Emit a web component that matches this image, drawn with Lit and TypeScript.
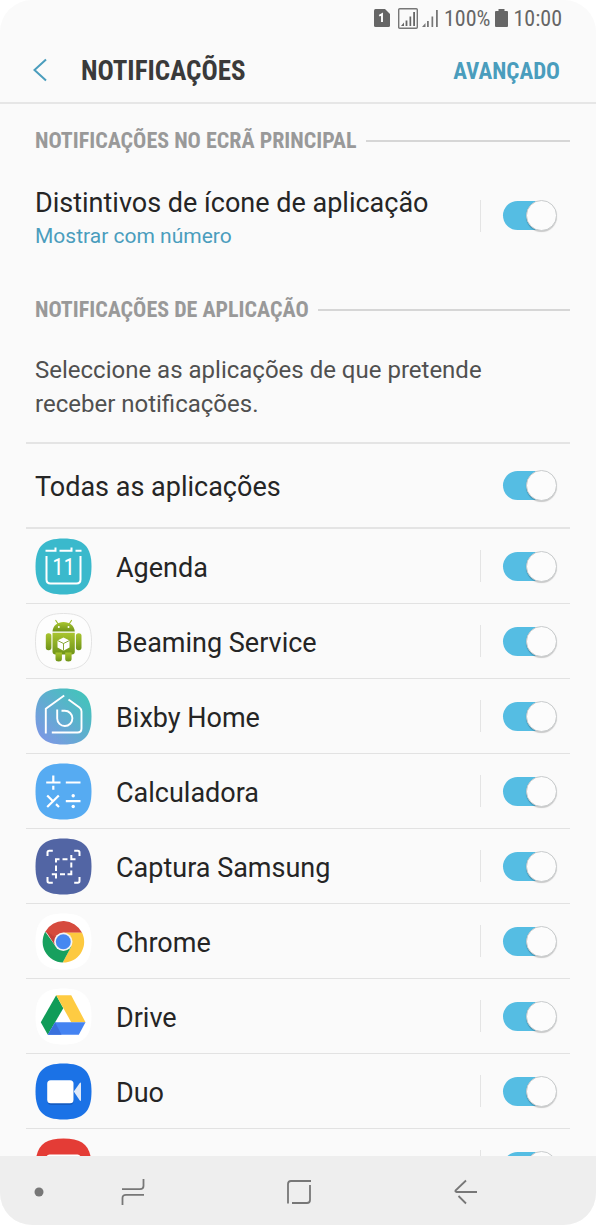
import { LitElement, html, css, svg, nothing, TemplateResult } from "lit";
import { customElement, property } from "lit/decorators.js";

const squircle = "M28 0C8 0 0 8 0 28S8 56 28 56 56 48 56 28 48 0 28 0Z";

const icons: Record<string, TemplateResult> = {
  agenda: svg`
    <path d=${squircle} fill="#3ab9cc"/>
    <g fill="none" stroke="#fff" stroke-width="2">
      <path d="M10 12.300H20V9M24 12.300H36V9M40 12.300H46"/>
      <path d="M11 17.500V41Q11 45 15 45H41Q45 45 45 41V17.500"/>
    </g>
    <text x="28" y="36.500" text-anchor="middle" fill="#fff" font-size="23" font-weight="400" font-family="Roboto Condensed, Roboto, sans-serif">11</text>`,
  beaming: svg`
    <defs>
      <linearGradient id="droid" x2="0" y2="1"><stop offset="0" stop-color="#a9c52f"/><stop offset="1" stop-color="#6f9318"/></linearGradient>
    </defs>
    <path d=${squircle} fill="#fdfdfd" stroke="#e3e3e3" stroke-width="1"/>
    <g fill="url(#droid)">
      <path d="M17 18C17.500 12 22 8.600 28 8.600S38.700 12 39.300 18Z"/>
      <path d="M17 19.200H39.300V38Q39.300 41 36.300 41H20Q17 41 17 38Z"/>
      <rect x="10.300" y="19.700" width="5.600" height="17" rx="2.600"/>
      <rect x="40.400" y="19.700" width="5.600" height="17" rx="2.600"/>
      <path d="M20 39H26.400V45.500Q26.400 48 23.200 48T20 45.500ZM29.700 39H36.100V45.500Q36.100 48 32.900 48T29.700 45.500Z"/>
    </g>
    <path d="M20.300 7L23 11M36 7L33.300 11" stroke="#9dbb2c" stroke-width="1.200" stroke-linecap="round"/>
    <g fill="#fff"><circle cx="23.300" cy="13.600" r="1"/><circle cx="33" cy="13.600" r="1"/></g>
    <path d="M28 24L34 27V34L28 37.200 22 34V27Z" fill="#fff"/>
    <path d="M22 27L28 30L34 27M28 30V37" fill="none" stroke="#7b9d20" stroke-width=".9"/>`,
  bixby: svg`
    <defs>
      <linearGradient id="bixby" x1="1" y1="0" x2="0" y2="1"><stop offset=".15" stop-color="#46c1bd"/><stop offset=".9" stop-color="#7c98e4"/></linearGradient>
    </defs>
    <path d=${squircle} fill="url(#bixby)"/>
    <g fill="none" stroke="#fff" stroke-width="1.900">
      <path d="M10.300 45V20.300L28.700 7"/>
      <path d="M33 11L44 19Q46 20.500 46 23V40Q46 44 42 44H16.300"/>
      <path d="M21.700 21V30A7.600 7.600 0 1 0 29.300 22.300H26"/>
    </g>`,
  calc: svg`
    <path d=${squircle} fill="#56abf2"/>
    <g stroke="#fff" stroke-width="2.200" fill="none">
      <path d="M10.700 19H25M17.800 12V19M17.800 22.300V26.300M30.300 19H45M30.300 37.700H45"/>
      <path d="M11.700 32L18.300 38.500M20.500 40.600L23.500 43.500M23.300 32L11.700 43.500"/>
    </g>
    <circle cx="37.700" cy="32.300" r="1.700" fill="#fff"/><circle cx="37.700" cy="43" r="1.700" fill="#fff"/>`,
  captura: svg`
    <path d=${squircle} fill="#5265a4"/>
    <g stroke="#fff" stroke-width="2" fill="none">
      <path d="M12 17.500V14Q12 12.300 13.700 12.300H17.300M38.700 12.300H42.300Q44 12.300 44 14V17.500M44 38.500V42.500Q44 44.200 42.300 44.200H38.700M17.300 44.200H13.700Q12 44.200 12 42.500V38.500"/>
      <path d="M20.500 24V20.700H24M27 20.700H32M35.800 16.500V20.700H40M20.500 27V32.500M35.800 24V29M35.800 32V35.700H32M29.500 35.700H24.500M16.300 35.700H20.500V40"/>
    </g>`,
  chrome: svg`
    <path d=${squircle} fill="#fff"/>
    <path d="M28 28.300L9.700 18.300A20.800 20.800 0 0 1 46.600 19.300L28 19.300Z" fill="#d64b3e"/>
    <path d="M46.600 19.300A20.800 20.800 0 0 1 27.200 49.100L35.700 33L28 19.300Z" fill="#fdc93f"/>
    <path d="M9.700 18.300A20.800 20.800 0 0 0 27.200 49.100L35.800 33L20.300 33Z" fill="#17a05e"/>
    <path d="M10.200 17.500L20.300 33L21 24Z" fill="#c5403a"/>
    <circle cx="27.800" cy="28.300" r="9.200" fill="#f4f4f4"/>
    <circle cx="27.800" cy="28.300" r="7.500" fill="#4688f1"/>`,
  drive: svg`
    <path d=${squircle} fill="#fff"/>
    <path d="M20.700 6.700L27.800 19.700 12.300 46.300 5.300 33.700Z" fill="#109c58"/>
    <path d="M20.700 6.700H35.700L50 33.700H35.700Z" fill="#fecb42"/>
    <path d="M19.700 33.700H50L43.300 46.300H12.300Z" fill="#4483f2"/>
    <path d="M19.700 33.700L26 46.300H12.300Z" fill="#3a70dc"/>`,
  duo: svg`
    <path d=${squircle} fill="#1b72e6"/>
    <rect x="12" y="18.500" width="26" height="23" rx="4" fill="#155bc0"/>
    <rect x="11.700" y="16.700" width="26.300" height="23" rx="3.500" fill="#fff"/>
    <path d="M38.300 28L44.300 19.500Q45.500 18.500 45.500 20V36.500Q45.500 38 44.300 37Z" fill="#dfe9f8"/>`,
  email: svg`
    <path d=${squircle} fill="#e43c36"/>
    <rect x="11" y="16" width="34" height="26" rx="3" fill="#fff"/>`,
};

@customElement("toggle-switch")
export class ToggleSwitch extends LitElement {
  @property() label = "";
  @property({ type: Boolean }) divided = false;

  static styles = css`
    :host { display: flex; align-items: center; flex: none; }
    .divider { width: 1px; height: 32px; background: #e4e4e4; margin-right: 22px; }
    .switch {
      appearance: none;
      display: grid;
      align-items: center;
      width: 54px;
      height: 32px;
      margin: 0 13px 0 0;
      cursor: pointer;
    }
    .switch::before, .switch::after { content: ""; grid-area: 1 / 1; box-sizing: border-box; }
    .switch::before { width: 48px; height: 29px; border-radius: 15px; background: #bbb; }
    .switch::after {
      width: 31px;
      height: 31px;
      border-radius: 50%;
      background: #fcfcfc;
      border: 1px solid #c9cccd;
      box-shadow: 0 1px 1px rgba(0, 0, 0, 0.2);
    }
    .switch:checked::before { background: #55bde3; }
    .switch:checked::after { justify-self: end; }
  `;

  render() {
    return html`
      ${this.divided ? html`<span class="divider"></span>` : nothing}
      <input class="switch" type="checkbox" role="switch" aria-label=${this.label} checked />
    `;
  }
}

@customElement("app-root")
export class AppRoot extends LitElement {
  private apps = [
    ["agenda", "Agenda"],
    ["beaming", "Beaming Service"],
    ["bixby", "Bixby Home"],
    ["calc", "Calculadora"],
    ["captura", "Captura Samsung"],
    ["chrome", "Chrome"],
    ["drive", "Drive"],
    ["duo", "Duo"],
    ["email", ""],
  ];

  static styles = css`
    :host {
      display: flex;
      flex-direction: column;
      height: 100vh;
      border-radius: 32px;
      overflow: hidden;
      background: #fafafa;
      color: #252525;
      font-family: Roboto, sans-serif;
      font-size: 27px;
      line-height: 34px;
    }
    svg { display: block; flex: none; }
    button { border: 0; padding: 0; background: none; font: inherit; color: inherit; cursor: pointer; }
    .status, .section, .title, .advanced { font-family: "Roboto Condensed", Roboto, sans-serif; }
    .status {
      display: flex;
      align-items: center;
      justify-content: flex-end;
      height: 36px;
      padding-right: 34px;
      font-size: 22px;
      color: #666;
    }
    .status span { padding-top: 2px; }
    .sim { margin-right: 8px; }
    .signal { margin-right: 4px; }
    .bars { margin-right: 6px; }
    .battery { margin: 0 5px; }
    .bar {
      display: flex;
      align-items: center;
      height: 64px;
      padding: 2px 36px 0 32px;
      border-bottom: 2px solid #e6e6e6;
    }
    .title { flex: 1; margin: 2px 0 0 33px; font-size: 27px; font-weight: 700; color: #3a3a3a; }
    .advanced { margin-top: 4px; font-size: 23px; font-weight: 700; color: #4a9dbd; }
    .content { flex: 1; min-height: 0; overflow: hidden; padding: 0 26px; }
    .section {
      display: flex;
      align-items: center;
      gap: 9px;
      margin: 0;
      padding: 20px 0 0 9px;
      font-size: 22px;
      line-height: 34px;
      font-weight: 700;
      color: #999;
    }
    .section::after { content: ""; flex: 1; height: 2px; background: #d6d6d6; }
    .row { display: flex; align-items: center; padding-left: 9px; }
    .badges { height: 115px; }
    .text { flex: 1; padding-top: 2px; }
    .badges .text, .app .text { padding-top: 4px; }
    .label { display: block; padding-top: 2px; }
    .sub { display: block; font-size: 21px; line-height: 32px; color: #4a9dbd; }
    .intro {
      margin: 0;
      padding: 26px 60px 21px 9px;
      font-size: 24px;
      color: #505050;
      border-bottom: 2px solid #e4e4e4;
    }
    .all { height: 83px; border-bottom: 2px solid #e4e4e4; }
    .apps { list-style: none; margin: 0; padding: 0; }
    .app { height: 74px; gap: 24px; border-bottom: 1px solid #e2e2e2; }
    .nav {
      display: grid;
      grid-template-columns: 22px 1fr 1fr 1fr;
      place-items: center;
      flex: none;
      height: 69px;
      padding: 2px 47px 0 28px;
      box-sizing: border-box;
      background: #eee;
    }
  `;

  render() {
    return html`
      <div class="status">
        <svg class="sim" width="16" height="18" viewBox="0 0 16 18">
          <path d="M1.500 0H11L16 5V16.500Q16 18 14.500 18H1.500Q0 18 0 16.500V1.500Q0 0 1.500 0Z" fill="#666"/>
          <path d="M5.200 6.800L8 5.200V13" fill="none" stroke="#fff" stroke-width="1.900"/>
        </svg>
        <svg class="signal" width="20" height="21" viewBox="0 0 20 21">
          <rect x=".7" y=".7" width="18.600" height="19.600" rx="1" fill="none" stroke="#777" stroke-width="1.400"/>
          <path d="M3 18L6 14.500V18ZM7.600 12.500H9.400V18H7.600ZM11.500 8.500H13.200V18H11.500ZM15.200 4H17V18H15.200Z" fill="#666"/>
        </svg>
        <svg class="bars" width="16" height="21" viewBox="0 0 16 21">
          <path d="M0 19L3.500 15V19ZM5 13H6.800V19H5ZM9.500 8.500H11.200V19H9.500ZM14 2H15.800V19H14Z" fill="#777"/>
        </svg>
        <span>100%</span>
        <svg class="battery" width="13" height="18" viewBox="0 0 13 18">
          <path d="M3.500 0H9.500V2H12Q13 2 13 3V17Q13 18 12 18H1Q0 18 0 17V3Q0 2 1 2H3.500Z" fill="#666"/>
        </svg>
        <span>10:00</span>
      </div>

      <header class="bar">
        <button aria-label="Voltar">
          <svg width="16" height="24" viewBox="0 0 16 24"><path d="M14 1.500L2.500 12L14 22.500" fill="none" stroke="#4a9dbd" stroke-width="2"/></svg>
        </button>
        <h1 class="title">NOTIFICAÇÕES</h1>
        <button class="advanced">AVANÇADO</button>
      </header>

      <main class="content">
        <h2 class="section">NOTIFICAÇÕES NO ECRÃ PRINCIPAL</h2>
        <div class="row badges">
          <div class="text">
            <span class="label">Distintivos de ícone de aplicação</span>
            <span class="sub">Mostrar com número</span>
          </div>
          <toggle-switch divided label="Distintivos de ícone de aplicação"></toggle-switch>
        </div>

        <h2 class="section">NOTIFICAÇÕES DE APLICAÇÃO</h2>
        <p class="intro">Seleccione as aplicações de que pretende receber notificações.</p>
        <div class="row all">
          <span class="text">Todas as aplicações</span>
          <toggle-switch label="Todas as aplicações"></toggle-switch>
        </div>
        <ul class="apps">
          ${this.apps.map(([icon, name]) => html`
            <li class="row app">
              <svg width="57" height="57" viewBox="-0.5 -0.5 57 57" aria-hidden="true">${icons[icon]}</svg>
              <span class="text">${name}</span>
              <toggle-switch divided label=${name || "E-mail"}></toggle-switch>
            </li>`)}
        </ul>
      </main>

      <nav class="nav">
        <svg width="10" height="10" viewBox="0 0 10 10"><circle cx="5" cy="5" r="4.500" fill="#777"/></svg>
        <button aria-label="Recentes">
          <svg width="24" height="26" viewBox="0 0 24 26" fill="none" stroke="#777" stroke-width="1.800"><path d="M1 10.200H19Q22.500 10.200 22.500 7V0M23 15.800H5Q1.500 15.800 1.500 19V26"/></svg>
        </button>
        <button aria-label="Início">
          <svg width="24" height="24" viewBox="0 0 24 24" fill="none" stroke="#777" stroke-width="1.800"><path d="M1 23.500V4Q1 1 4 1H24M23 5V20Q23 23 20 23H5"/></svg>
        </button>
        <button aria-label="Retroceder">
          <svg width="24" height="26" viewBox="0 0 24 26" fill="none" stroke="#777" stroke-width="1.800"><path d="M12 1.500L1.500 11.500Q1 13 2.500 13H23M4.500 17L12 24.500"/></svg>
        </button>
      </nav>
    `;
  }
}
